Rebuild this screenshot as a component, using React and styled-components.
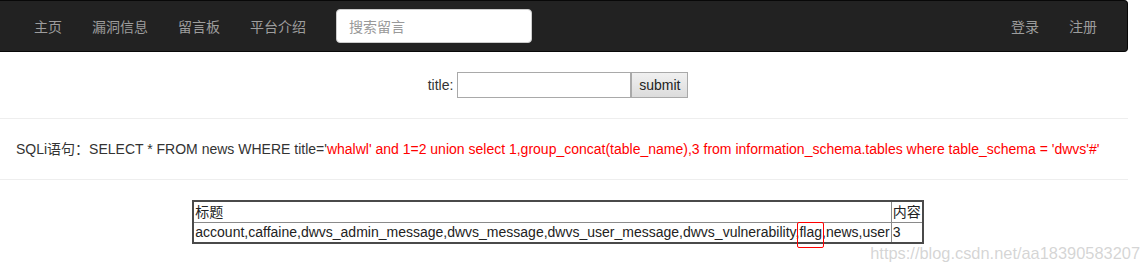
import React from "react";
import styled, { createGlobalStyle } from "styled-components";

const Global = createGlobalStyle`
  html, body { margin: 0; padding: 0; background: #fff; }
  body {
    font-family: "Liberation Sans", Arial, "Noto Sans CJK SC", sans-serif;
    font-size: 14px;
    line-height: 20px;
    color: #333;
  }
  * { box-sizing: border-box; }
`;

const Page = styled.div`
  position: relative;
  width: 1141px;
  height: 271px;
  overflow: hidden;
`;

const Content = styled.div`
  width: 1128px;
`;

const Navbar = styled.nav`
  display: flex;
  align-items: center;
  height: 52px;
  background: #222;
  border: 1px solid #080808;
  border-left: none;
  border-radius: 0 4px 4px 0;
  padding: 0 15px 0 19px;
`;

const NavList = styled.div`
  display: flex;
  align-items: center;
  height: 100%;
`;

const NavLink = styled.a`
  display: block;
  padding: 15px;
  font-family: "Noto Sans CJK SC", "Liberation Sans", sans-serif;
  font-size: 14px;
  line-height: 20px;
  color: #9d9d9d;
  text-decoration: none;
  cursor: pointer;
`;

const SearchForm = styled.form`
  padding: 0 15px;
  margin: 0;
`;

const SearchInput = styled.input`
  display: block;
  width: 196px;
  height: 34px;
  padding: 6px 12px;
  border: 1px solid #ccc;
  border-radius: 4px;
  background: #fff;
  font-family: "Noto Sans CJK SC", "Liberation Sans", sans-serif;
  font-size: 14px;
  color: #555;
  outline: none;
  &::placeholder { color: #999; }
`;

const Spacer = styled.div`
  flex: 1;
`;

const Centered = styled.div`
  width: 1114px;
  display: flex;
  justify-content: center;
`;

const TitleForm = styled.form`
  display: flex;
  align-items: center;
  margin: 20px 0 0 2px;
  font-size: 14px;
  color: #333;
`;

const Label = styled.span`
  margin-right: 4px;
`;

const TextInput = styled.input`
  width: 174px;
  height: 26px;
  border: 1px solid #a9a9a9;
  padding: 2px 4px;
  font-family: "Liberation Sans", Arial, sans-serif;
  font-size: 14px;
  outline: none;
`;

const SubmitButton = styled.button`
  width: 57px;
  height: 26px;
  border: 1px solid #a9a9a9;
  border-radius: 0;
  background: linear-gradient(#f0f0f0, #dcdcdc);
  font-family: "Liberation Sans", Arial, sans-serif;
  font-size: 14px;
  color: #222;
  padding: 0;
`;

const Rule = styled.hr`
  margin: 20px 0;
  border: 0;
  border-top: 1px solid #eee;
  height: 0;
`;

const Statement = styled.p`
  margin: 0;
  padding-left: 16px;
  font-size: 14px;
  line-height: 20px;
  color: #333;
  white-space: nowrap;
  font-family: "Liberation Sans", Arial, "Noto Sans CJK SC", sans-serif;
`;

const Injected = styled.span`
  color: #f00;
`;

const ResultTable = styled.table`
  border-collapse: collapse;
  border: 2px solid #4a4a4a;
  margin-left: 2px;
  font-family: "Liberation Sans", Arial, "Noto Sans CJK SC", sans-serif;
  font-size: 14px;
  line-height: 19px;
  color: #222;
`;

const Cell = styled.td`
  border: 1px solid #8a8a8a;
  padding: 0 1px;
  height: 21px;
  text-align: left;
  white-space: nowrap;
  font-weight: normal;
  vertical-align: middle;
`;

const HeadCell = styled(Cell).attrs({ as: "th" })`
  font-family: "Noto Sans CJK SC", "Liberation Sans", sans-serif;
  font-size: 14px;
`;

const Marked = styled.span`
  position: relative;
  z-index: 2;
  &::after {
    content: "";
    position: absolute;
    z-index: 2;
    left: -2px;
    right: -2px;
    top: -2px;
    bottom: -8px;
    border: 1px solid #f00;
    border-radius: 2px;
  }
`;

const Watermark = styled.div`
  position: absolute;
  right: 1px;
  top: 243px;
  font-family: "Liberation Sans", Arial, sans-serif;
  font-size: 16.4px;
  line-height: 20px;
  color: rgba(185, 185, 185, 0.6);
  pointer-events: none;
`;

export default function App() {
  return (
    <>
      <Global />
      <Page>
        <Content>
          <Navbar>
            <NavList>
              <NavLink>主页</NavLink>
              <NavLink>漏洞信息</NavLink>
              <NavLink>留言板</NavLink>
              <NavLink>平台介绍</NavLink>
            </NavList>
            <SearchForm onSubmit={(e) => e.preventDefault()}>
              <SearchInput placeholder="搜索留言" />
            </SearchForm>
            <Spacer />
            <NavList>
              <NavLink>登录</NavLink>
              <NavLink>注册</NavLink>
            </NavList>
          </Navbar>

          <Centered>
            <TitleForm onSubmit={(e) => e.preventDefault()}>
              <Label>title:</Label>
              <TextInput type="text" />
              <SubmitButton type="submit">submit</SubmitButton>
            </TitleForm>
          </Centered>
          <Rule />

          <Statement>
            SQLi语句：SELECT * FROM news WHERE title='
            <Injected>
              whalwl' and 1=2 union select 1,group_concat(table_name),3 from
              information_schema.tables where table_schema = 'dwvs'#'
            </Injected>
          </Statement>
          <Rule />

          <Centered>
            <ResultTable>
              <tbody>
                <tr>
                  <HeadCell>标题</HeadCell>
                  <HeadCell>内容</HeadCell>
                </tr>
                <tr>
                  <Cell>
                    account,caffaine,dwvs_admin_message,dwvs_message,dwvs_user_message,dwvs_vulnerability,
                    <Marked>flag</Marked>,news,user
                  </Cell>
                  <Cell>3</Cell>
                </tr>
              </tbody>
            </ResultTable>
          </Centered>
        </Content>
        <Watermark>https://blog.csdn.net/aa18390583207</Watermark>
      </Page>
    </>
  );
}
